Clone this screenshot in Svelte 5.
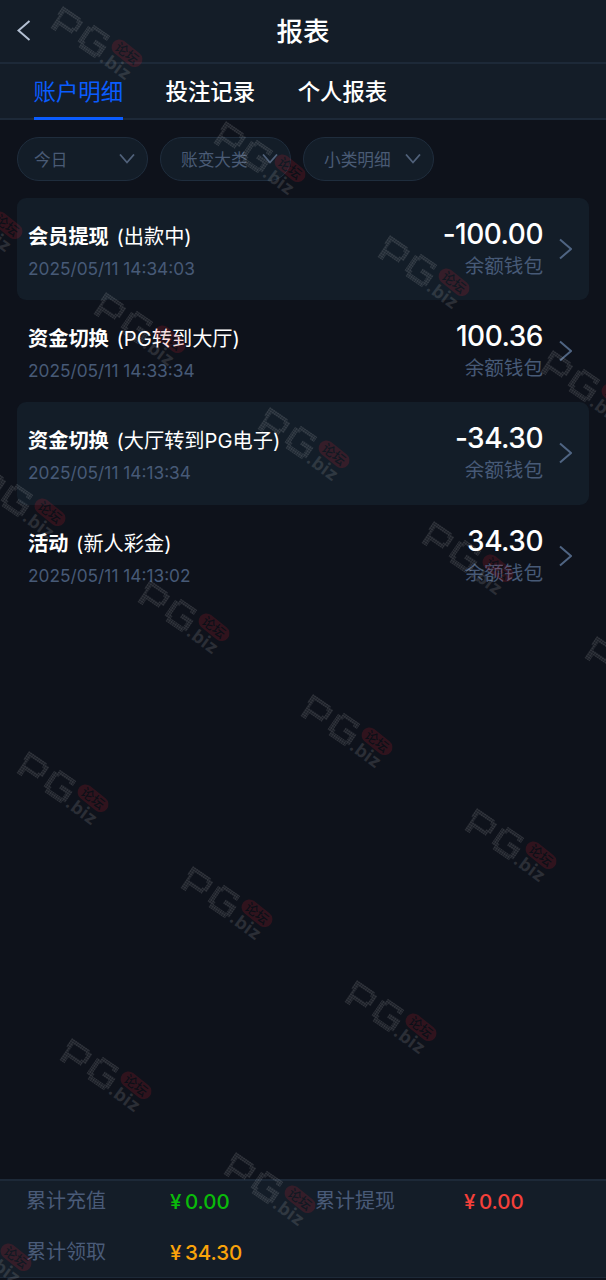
<script lang="ts">
    type RecordItem = {
        type: string;
        note: string;
        time: string;
        amount: string;
    };

    const tabs = ['账户明细', '投注记录', '个人报表'];
    let activeTab = $state(0);

    const filters = ['今日', '账变大类', '小类明细'];

    const records: RecordItem[] = [
        { type: '会员提现', note: '出款中', time: '2025/05/11 14:34:03', amount: '-100.00' },
        { type: '资金切换', note: 'PG转到大厅', time: '2025/05/11 14:33:34', amount: '100.36' },
        { type: '资金切换', note: '大厅转到PG电子', time: '2025/05/11 14:13:34', amount: '-34.30' },
        { type: '活动', note: '新人彩金', time: '2025/05/11 14:13:02', amount: '34.30' },
    ];

    const totals = [
        { label: '累计充值', value: '0.00', kind: 'deposit' },
        { label: '累计提现', value: '0.00', kind: 'withdraw' },
        { label: '累计领取', value: '34.30', kind: 'claimed' },
    ];

    // top left corner of each watermark
    const marks = [
        [63, 6], [226, 121], [390, 235], [553, 350],
        [-57, 178], [106, 292], [270, 407], [434, 521], [597, 636],
        [-14, 465], [150, 580], [313, 694], [477, 808],
        [29, 751], [193, 866], [357, 980],
        [72, 1038], [236, 1152], [-48, 1210],
    ];
</script>

<div class="page">
    <header>
        <button type="button" class="back" aria-label="back">
            <svg width="14" height="22" viewBox="0 0 14 22">
                <path d="M12.5 1 1.5 10.5l11 9.5" />
            </svg>
        </button>
        <h1>报表</h1>
    </header>

    <nav>
        {#each tabs as tab, i}
            <button type="button" class:active={i === activeTab} onclick={() => (activeTab = i)}>{tab}</button>
        {/each}
    </nav>

    <main>
        <div class="filters">
            {#each filters as filter, i}
                <button type="button" class:first={i === 0}>
                    <span>{filter}</span>
                    <svg width="16" height="10" viewBox="0 0 16 10">
                        <path d="M1 .5l7 8 7-8" />
                    </svg>
                </button>
            {/each}
        </div>

        <ul>
            {#each records as record}
                <li>
                    <div class="info">
                        <p class="title"><b>{record.type}</b> ({record.note})</p>
                        <p class="time">{record.time}</p>
                    </div>
                    <div class="money">
                        <p class="amount">{record.amount}</p>
                        <p class="wallet">余额钱包</p>
                    </div>
                    <svg width="13" height="22" viewBox="0 0 13 22">
                        <path d="M1 1.5 12 11 1 20.5" />
                    </svg>
                </li>
            {/each}
        </ul>
    </main>

    <footer>
        {#each totals as total}
            <div class="total">
                <span class="label">{total.label}</span>
                <span class="value {total.kind}"><i>¥</i>{total.value}</span>
            </div>
        {/each}
    </footer>

    <svg class="watermark" width="606" height="1280" viewBox="0 0 606 1280">
        <defs>
            <pattern id="dots" width="2.4" height="2.4" patternUnits="userSpaceOnUse">
                <rect width="2" height="2" fill="#fff" />
            </pattern>
            <g id="mark">
                <path
                    fill="url(#dots)"
                    fill-rule="evenodd"
                    d="M0 0H22V2H26V14H23V18H8V25H2V10H0ZM5 4V14H20V12H22V6H20V4Z"
                />
                <path
                    fill="url(#dots)"
                    d="M36 -2H56V4H51V2H39V5H37V17H39V20H54V14H46V9H59V22H56V25H36V21H32V2H36Z"
                />
                <text class="biz" transform="translate(60 25) rotate(2)">.biz</text>
                <g class="pill" transform="rotate(4 80 3)">
                    <rect x="62" y="-5" width="35" height="15.5" rx="7.7" />
                    <text x="66.5" y="7.5">论坛</text>
                </g>
            </g>
        </defs>
        {#each marks as [x, y]}
            <use href="#mark" transform="translate({x} {y}) rotate(34.5)" />
        {/each}
    </svg>
</div>

<style>
    :global(body) {
        background: #0e121b;
    }
    .page {
        position: relative;
        display: flex;
        flex-direction: column;
        height: 1280px;
        overflow: hidden;
        color: #fff;
        background: #0e121b;
        font-family: Inter, 'Noto Sans CJK SC', sans-serif;
    }
    button {
        padding: 0;
        border: none;
        background: none;
        color: inherit;
        font: inherit;
        cursor: pointer;
    }
    h1,
    p,
    ul {
        margin: 0;
        padding: 0;
        font-weight: 400;
    }
    svg {
        display: block;
        fill: none;
        stroke-width: 2;
    }
    header {
        display: grid;
        grid-template-columns: 1fr auto 1fr;
        align-items: center;
        height: 62px;
        padding: 0 17px;
        background: #141d28;
        border-bottom: 2px solid #1d2938;
    }
    header svg {
        stroke: #b3bfd2;
    }
    h1 {
        font-size: 26.5px;
        font-weight: 500;
        line-height: 61px;
    }
    nav {
        display: flex;
        gap: 42.5px;
        height: 54px;
        padding: 0 33.5px;
        background: #141d28;
        border-bottom: 2px solid #1d2938;
    }
    nav button {
        box-sizing: border-box;
        height: 56px;
        border-bottom: 3px solid transparent;
        font-size: 22.4px;
        font-weight: 500;
        line-height: 55px;
    }
    nav .active {
        color: #0a5cff;
        border-color: #0a5cff;
        font-weight: 400;
    }
    main {
        flex: 1;
        padding: 17px 17px 0;
    }
    .filters {
        display: flex;
        gap: 12px;
    }
    .filters button {
        display: flex;
        align-items: center;
        justify-content: space-between;
        box-sizing: border-box;
        width: 131px;
        height: 44px;
        padding: 0 12px 0 20px;
        border: 1px solid #1f2d3d;
        border-radius: 22px;
        background: #131d28;
        color: #4a5b75;
        font-size: 16.7px;
    }
    .filters .first {
        padding-left: 16px;
    }
    .filters svg {
        stroke: #50617a;
        stroke-width: 1.8;
    }
    ul {
        margin-top: 17px;
        list-style: none;
    }
    li {
        display: flex;
        align-items: center;
        box-sizing: border-box;
        height: 102.2px;
        padding: 0 17px 0 11px;
        border-radius: 9px;
    }
    li:nth-child(odd) {
        background: #131d28;
    }
    li svg {
        margin-left: 16px;
        stroke: #4f6482;
    }
    .info {
        flex: 1;
        padding-top: 8px;
    }
    .title {
        font-size: 20.2px;
        line-height: 32px;
    }
    .title b {
        margin-right: 2px;
        font-weight: 700;
    }
    .time {
        color: #475a77;
        font-size: 17.3px;
        line-height: 32px;
    }
    .money {
        text-align: right;
    }
    .amount {
        font-size: 28px;
        font-weight: 500;
        letter-spacing: -0.5px;
        line-height: 34px;
    }
    .wallet {
        color: #475a77;
        font-size: 19.6px;
        line-height: 30px;
    }
    footer {
        display: flex;
        flex-wrap: wrap;
        align-content: flex-start;
        box-sizing: border-box;
        height: 99px;
        margin-bottom: 2px;
        padding: 0 26px;
        background: #141d28;
        border-top: 2px solid #1d2938;
        border-bottom: 1px solid #1d2938;
    }
    .total {
        display: flex;
        width: 289px;
        height: 51px;
        line-height: 41px;
        font-size: 20px;
    }
    .total:nth-child(2) {
        width: 250px;
    }
    .total:nth-child(3) {
        height: 40px;
    }
    .label {
        width: 144px;
        color: #4a5b78;
    }
    .value {
        font-size: 20.5px;
        font-weight: 500;
    }
    .value i {
        margin-right: 3.5px;
        font-style: normal;
    }
    .total:nth-child(2) .label {
        width: 149px;
    }
    .deposit {
        color: #0abb0a;
    }
    .withdraw {
        color: #f5403a;
    }
    .claimed {
        color: #faa30a;
    }
    .watermark {
        position: absolute;
        inset: 0;
        opacity: 0.14;
        pointer-events: none;
    }
    .watermark .biz {
        fill: #d8d8d8;
        font-size: 18px;
        font-weight: 700;
        letter-spacing: 0.5px;
    }
    .pill rect {
        fill: #ff1f2f;
    }
    .pill text {
        fill: #000;
        font-family: 'Noto Sans CJK SC', sans-serif;
        font-size: 13px;
        font-weight: 500;
    }
</style>
